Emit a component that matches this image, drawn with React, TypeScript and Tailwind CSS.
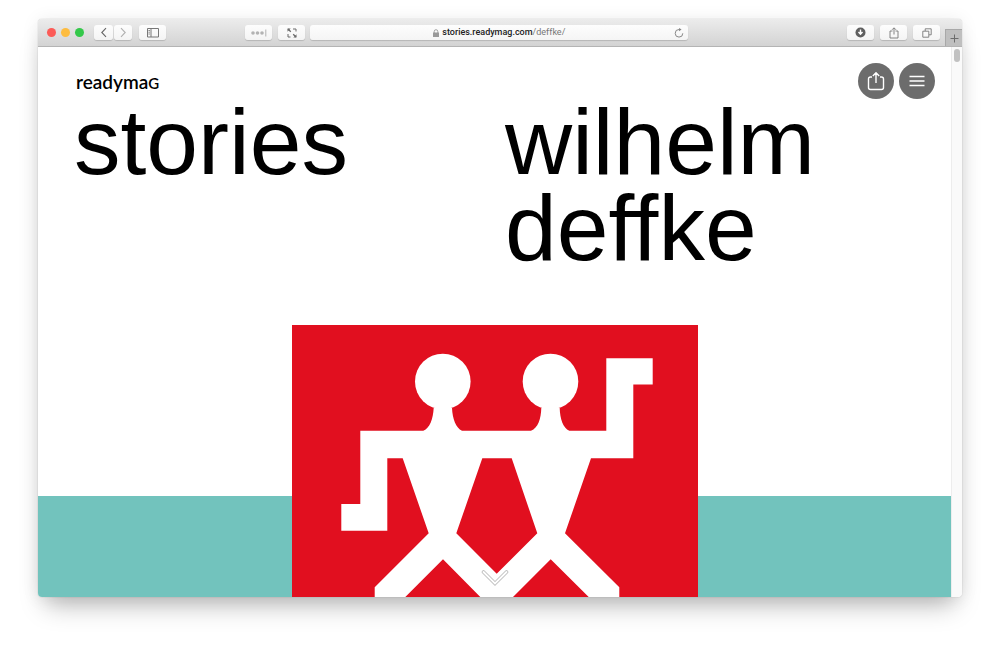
import type { ReactNode } from "react";

function ToolButton({ label, width, children }: { label: string; width: string; children: ReactNode }) {
  return (
    <button
      type="button"
      aria-label={label}
      className={`${width} flex h-[15px] shrink-0 items-center justify-center rounded-[3px] bg-gradient-to-b from-[#fdfdfd] to-[#f4f4f4] shadow-[0_1px_1px_rgba(0,0,0,0.16)]`}
    >
      {children}
    </button>
  );
}

function Toolbar() {
  return (
    <header className="flex h-7 items-center border-b border-[#b4b4b4] bg-gradient-to-b from-[#ececec] to-[#d3d3d3] pl-[9px]">
      <div className="flex gap-[5px]">
        <span className="size-[9px] rounded-full bg-[#fc5b57]" />
        <span className="size-[9px] rounded-full bg-[#fdbc40]" />
        <span className="size-[9px] rounded-full bg-[#34c84a]" />
      </div>
      <div className="ml-[10px] flex gap-px">
        <ToolButton label="Back" width="w-[19px]">
          <svg width="8" height="11" viewBox="0 0 8 11" fill="none" stroke="#666" strokeWidth="1.1">
            <path d="M6 1.2 1.8 5.5 6 9.8" />
          </svg>
        </ToolButton>
        <ToolButton label="Forward" width="w-[18px]">
          <svg width="8" height="11" viewBox="0 0 8 11" fill="none" stroke="#b0b0b0" strokeWidth="1.1">
            <path d="M2 1.2 6.2 5.5 2 9.8" />
          </svg>
        </ToolButton>
      </div>
      <div className="ml-[7px] flex">
        <ToolButton label="Show sidebar" width="w-[27px]">
          <svg width="12" height="10" viewBox="0 0 12 10" fill="none" stroke="#777" strokeWidth="1">
            <path d="M.5.5h11v8.500h-11zM4 .5v8.500M1.500 2.500h1.300M1.500 4.200h1.300M1.500 6h1.300" />
          </svg>
        </ToolButton>
      </div>
      <div className="flex-1" />
      <div className="flex gap-1.5">
        <ToolButton label="Passwords" width="w-[27px]">
          <svg width="16" height="8" viewBox="0 0 16 8" fill="#b3b3b3">
            <circle cx="2" cy="4" r="1.8" />
            <circle cx="6.500" cy="4" r="1.800" />
            <circle cx="11" cy="4" r="1.800" />
            <path d="M14.300 .5h1v7h-1z" />
          </svg>
        </ToolButton>
        <ToolButton label="Full page" width="w-[27px]">
          <svg width="10" height="10" viewBox="0 0 10 10" fill="none" stroke="#6b6b6b" strokeWidth="1">
            <path d="M6 1h3v2.500M1 6v3h2.500" />
            <path d="M1 1l2.800 2.800M9 9 6.200 6.200" strokeWidth="1.300" />
            <path d="M.5 .5h3.200L.5 3.700zM9.500 9.500H6.300l3.200-3.200z" fill="#6b6b6b" stroke="none" />
          </svg>
        </ToolButton>
      </div>
      <div className="relative ml-[5px] flex h-[15px] basis-[378px] items-center justify-center gap-[3px] rounded-[3px] bg-gradient-to-b from-[#fdfdfd] to-[#f5f5f5] font-['Roboto',sans-serif] text-[9px] leading-[15px] text-[#777] shadow-[0_1px_1px_rgba(0,0,0,0.16)]">
        <svg width="6" height="8" viewBox="0 0 6 8" fill="#999">
          <path d="M0 3.500h6V8H0z" />
          <path d="M1.200 4V2.500a1.800 1.800 0 0 1 3.600 0V4" fill="none" stroke="#999" strokeWidth=".9" />
        </svg>
        <p>
          <span className="font-medium text-[#222]">stories.readymag.com</span>/deffke/
        </p>
        <button type="button" aria-label="Reload" className="absolute top-[3px] right-1">
          <svg width="10" height="10" viewBox="0 0 10 10" fill="none" stroke="#888" strokeWidth="1">
            <path d="M5 1.500a3.800 3.800 0 1 0 3.800 3.800" />
            <path d="M5 0l2.600 1.600L5 3.200z" fill="#888" stroke="none" />
          </svg>
        </button>
      </div>
      <div className="flex-[2]" />
      <div className="flex gap-1.5">
        <ToolButton label="Downloads" width="w-[27px]">
          <svg width="11" height="11" viewBox="0 0 11 11">
            <circle cx="5.500" cy="5.500" r="5" fill="#5f5f5f" />
            <path d="M5.500 2.500v4M3.500 5l2 2.200 2-2.200" fill="none" stroke="#fff" strokeWidth="1.400" />
          </svg>
        </ToolButton>
        <ToolButton label="Share" width="w-[27px]">
          <svg width="10" height="12" viewBox="0 0 10 12" fill="none" stroke="#777" strokeWidth=".9">
            <path d="M3.500 4H1v7h8V4H6.500M5 7.500V1M3 2.800l2-2 2 2" />
          </svg>
        </ToolButton>
        <ToolButton label="Show all tabs" width="w-[27px]">
          <svg width="10" height="10" viewBox="0 0 10 10" fill="none" stroke="#777" strokeWidth=".9">
            <path d="M.8 3.200h6v6h-6zM3.200 3V.8h6v6H7" />
          </svg>
        </ToolButton>
      </div>
      <button
        type="button"
        aria-label="New tab"
        className="ml-[5px] flex h-[17px] w-[17px] items-center justify-center self-end border-t border-l border-[#a8a8a8] bg-[#bfbfbf]"
      >
        <svg width="9" height="9" viewBox="0 0 9 9" stroke="#6c6c6c" strokeWidth="1">
          <path d="M4.500 .5v8M.5 4.500h8" />
        </svg>
      </button>
    </header>
  );
}

function Poster() {
  return (
    <svg className="w-[406px] shrink-0 bg-[#e10f1f]" viewBox="292 325 406 272" fill="#fff" role="img" aria-label="Two figures arm in arm">
      <circle cx="442.800" cy="381.500" r="27.800" />
      <circle cx="550.500" cy="381.500" r="27.800" />
      <path
        fillRule="evenodd"
        d="M433.700 408C433 419 430 428 423.300 430.800H360.300V504H341.300V530.700H387.300V458.300H402.700L428.700 533.300 374.700 587.300V597H405.300L443 559.300 480.300 597H513L550.700 559.300 588.700 597H619.300V587.300L565 533.300 591 458.300H633.300V384.500H652.700V358.300H606.300V430.800H569.300C563 428 560 419 559.700 408H541.300C541 419 538 428 531 430.800H462C456 428 452.500 419 452 408ZM482.300 458.300H511.700L537.300 533.300 496.700 573.700 456.300 533.300Z"
      />
    </svg>
  );
}

function Story() {
  return (
    <main className="relative min-w-0 flex-1 bg-white text-black">
      <div className="pt-[23px] pl-[38px]">
        <a href="#readymag" className="block font-['Lato',sans-serif] text-[19px] leading-6 font-semibold">
          readyma<span className="text-[15px] uppercase">g</span>
        </a>
      </div>
      <h1 className="grid grid-cols-2 pt-1 pr-[15px] pb-[54px] pl-9 font-['Liberation_Sans',sans-serif] text-[93px] leading-[86px]">
        <span>stories</span>
        <span>
          wilhelm
          <br />
          deffke
        </span>
      </h1>
      <div className="flex justify-center bg-[linear-gradient(to_bottom,#fff_171px,#72c3bd_171px)]">
        <Poster />
      </div>
      <div className="absolute top-4 right-4 flex gap-[5px]">
        <button type="button" aria-label="Share story" className="flex size-9 items-center justify-center rounded-full bg-[#6c6c6c]">
          <svg width="18" height="20" viewBox="0 0 18 20" fill="none" stroke="#fff" strokeWidth="1.400">
            <path d="M5 6H3.500Q1.500 6 1.500 8V16.500Q1.500 18.500 3.500 18.500H14.500Q16.500 18.500 16.500 16.500V8Q16.500 6 14.500 6H13M9 12V2M5.800 5 9 1.800 12.200 5" />
          </svg>
        </button>
        <button type="button" aria-label="Menu" className="flex size-9 items-center justify-center rounded-full bg-[#6c6c6c]">
          <svg width="16" height="12" viewBox="0 0 16 12" stroke="#fff" strokeWidth="1.300">
            <path d="M.5 1.500h15M.5 6h15M.5 10.500h15" />
          </svg>
        </button>
      </div>
      <a href="#next" aria-label="Scroll down" className="absolute bottom-2.5 left-1/2 -translate-x-1/2">
        <svg width="28" height="18" viewBox="0 0 28 18" fill="none" strokeLinecap="round">
          <path d="M2.500 3 14 14.500 25.500 3" stroke="#bdbdbd" strokeWidth="3.600" />
          <path d="M2.500 3 14 14.500 25.500 3" stroke="#fff" strokeWidth="1.800" />
        </svg>
      </a>
    </main>
  );
}

export default function App() {
  return (
    <div className="min-h-screen bg-white px-[38px] pt-[19px] pb-[53px]">
      <div className="rounded-[4px] shadow-[0_0_1px_rgba(0,0,0,0.35),0_1px_18px_rgba(0,0,0,0.08),0_16px_24px_-8px_rgba(0,0,0,0.28)]">
        <div className="overflow-hidden rounded-[4px]">
          <Toolbar />
          <div className="flex">
            <Story />
            <div className="w-[11px] shrink-0 border-l border-[#ededed] bg-[#fafafa] pt-0.5 pl-0.5">
              <div className="h-[13px] w-1.5 rounded-full bg-[#c1c1c1]" />
            </div>
          </div>
        </div>
      </div>
    </div>
  );
}
